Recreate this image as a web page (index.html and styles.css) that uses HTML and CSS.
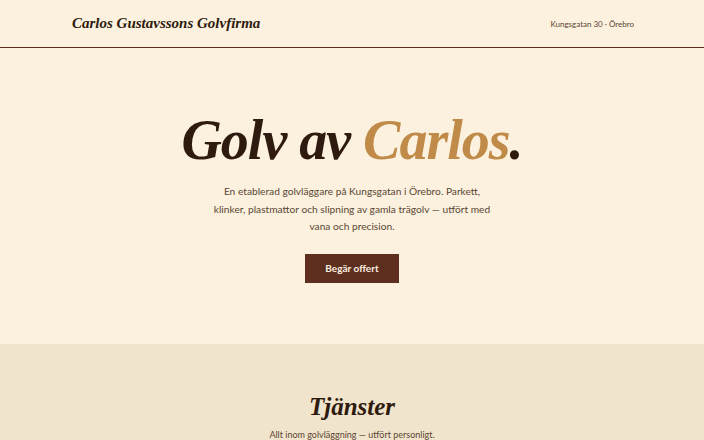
FILE: index.html
```html
<!DOCTYPE html>
<html lang="sv">
<head>
  <meta charset="UTF-8" />
  <meta name="viewport" content="width=device-width, initial-scale=1.0" />
  <title>Carlos Gustavssons Golvfirma</title>
  <link rel="stylesheet" href="styles.css">
</head>
<body>
  <header class="header">
    <div class="wrap header-inner">
      <a href="#" class="brand">Carlos Gustavssons Golvfirma</a>
      <span class="address">Kungsgatan 30 · Örebro</span>
    </div>
  </header>

  <section class="hero">
    <h1>Golv av <span class="accent">Carlos</span>.</h1>
    <p class="lead">En etablerad golvläggare på Kungsgatan i Örebro. Parkett, klinker, plastmattor och slipning av gamla trägolv — utfört med vana och precision.</p>
    <a href="#kontakt" class="cta">Begär offert</a>
  </section>

  <section class="services">
    <h2>Tjänster</h2>
    <p class="sub">Allt inom golvläggning — utfört personligt.</p>
  </section>
</body>
</html>
```

FILE: styles.css
```css
:root {
  --bg: #fbf1de;
  --bg-alt: #f1e4cc;
  --ink: #2e1a0e;
  --muted: #5a4634;
  --accent: #c08a48;
  --brown: #5e2e1e;
  --serif: "Liberation Serif", "Times New Roman", serif;
}
* {
  margin: 0;
  padding: 0;
  box-sizing: border-box;
}
body {
  background: var(--bg);
  color: var(--ink);
  font-family: Lato, "Open Sans", sans-serif;
}
.wrap {
  max-width: 560px;
  margin: 0 auto;
}
.header {
  border-bottom: 1px solid var(--brown);
}
.header-inner {
  height: 47px;
  display: flex;
  align-items: center;
  justify-content: space-between;
}
.brand {
  font-family: var(--serif);
  font-style: italic;
  font-weight: 700;
  font-size: 15px;
  color: var(--ink);
  text-decoration: none;
  padding-bottom: 1px;
}
.address {
  font-size: 8px;
  color: var(--muted);
  margin-right: -2px;
}
.hero {
  height: 296px;
  display: flex;
  flex-direction: column;
  align-items: center;
  text-align: center;
  padding-top: 64px;
}
.hero h1 {
  font-family: var(--serif);
  font-style: italic;
  font-weight: 700;
  font-size: 56px;
  line-height: 1;
  letter-spacing: -1px;
  color: var(--ink);
}
.accent {
  color: var(--accent);
}
.lead {
  max-width: 282px;
  margin-top: 15px;
  font-size: 10.2px;
  line-height: 17.5px;
  color: var(--muted);
}
.cta {
  margin-top: 18px;
  background: var(--brown);
  color: #fbefe0;
  text-decoration: none;
  font-size: 10px;
  font-weight: 700;
  width: 94px;
  height: 29px;
  display: flex;
  align-items: center;
  justify-content: center;
}
.services {
  background: var(--bg-alt);
  min-height: 100px;
  text-align: center;
  padding-top: 49px;
}
.services h2 {
  font-family: var(--serif);
  font-style: italic;
  font-weight: 700;
  font-size: 25px;
  line-height: 28px;
  color: var(--ink);
}
.sub {
  margin-top: 8px;
  font-size: 9px;
  color: var(--muted);
}
```
